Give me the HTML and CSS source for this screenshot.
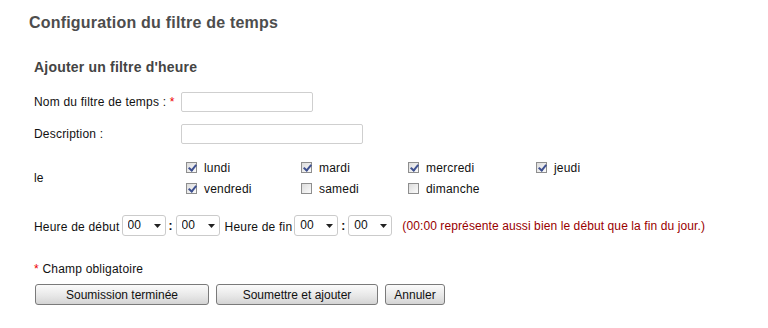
FILE: index.html
```html
<!DOCTYPE html>
<html lang="fr">
<head>
    <meta charset="UTF-8">
    <title>Configuration du filtre de temps</title>
    <link rel="stylesheet" href="styles.css">
</head>
<body>
    <div class="page">
        <h1 class="title">Configuration du filtre de temps</h1>

        <form class="panel">
            <h2 class="subtitle">Ajouter un filtre d'heure</h2>

            <div class="form-row">
                <label class="label">Nom du filtre de temps : <span class="req">*</span></label>
                <input type="text" class="text-input name-input">
            </div>

            <div class="form-row">
                <label class="label">Description :</label>
                <input type="text" class="text-input desc-input">
            </div>

            <div class="form-row days-row">
                <span class="label">le</span>
                <div class="days">
                    <label class="day"><input type="checkbox" class="check" checked> lundi</label>
                    <label class="day"><input type="checkbox" class="check" checked> mardi</label>
                    <label class="day"><input type="checkbox" class="check" checked> mercredi</label>
                    <label class="day"><input type="checkbox" class="check" checked> jeudi</label>
                    <label class="day"><input type="checkbox" class="check" checked> vendredi</label>
                    <label class="day"><input type="checkbox" class="check"> samedi</label>
                    <label class="day"><input type="checkbox" class="check"> dimanche</label>
                </div>
            </div>

            <div class="time-row">
                <span class="time-label">Heure de début</span>
                <div class="select-box">
                    <select class="select"><option>00</option></select>
                    <svg class="arrow" width="7" height="4" viewBox="0 0 7 4"><path d="M0 0H7L3.5 4Z" fill="#222"/></svg>
                </div>
                <span class="colon">:</span>
                <div class="select-box">
                    <select class="select"><option>00</option></select>
                    <svg class="arrow" width="7" height="4" viewBox="0 0 7 4"><path d="M0 0H7L3.5 4Z" fill="#222"/></svg>
                </div>
                <span class="time-label end-label">Heure de fin</span>
                <div class="select-box">
                    <select class="select"><option>00</option></select>
                    <svg class="arrow" width="7" height="4" viewBox="0 0 7 4"><path d="M0 0H7L3.5 4Z" fill="#222"/></svg>
                </div>
                <span class="colon">:</span>
                <div class="select-box">
                    <select class="select"><option>00</option></select>
                    <svg class="arrow" width="7" height="4" viewBox="0 0 7 4"><path d="M0 0H7L3.5 4Z" fill="#222"/></svg>
                </div>
                <span class="note">(00:00 représente aussi bien le début que la fin du jour.)</span>
            </div>

            <p class="required-note"><span class="req">*</span> Champ obligatoire</p>

            <div class="actions">
                <button type="button" class="btn btn-done">Soumission terminée</button>
                <button type="button" class="btn btn-add">Soumettre et ajouter</button>
                <button type="button" class="btn btn-cancel">Annuler</button>
            </div>
        </form>
    </div>
</body>
</html>
```

FILE: styles.css
```css
* {
    padding: 0;
    margin: 0;
    box-sizing: border-box;
}

body {
    font-family: "Liberation Sans", Arial, sans-serif;
    font-size: 12px;
    letter-spacing: 0.2px;
    color: #111;
    background-color: #fff;
}

.page {
    padding-top: 13px;
}

.title {
    margin-left: 29px;
    font-size: 16px;
    line-height: 20px;
    font-weight: bold;
    color: #4d4d4d;
}

.panel {
    padding-left: 34px;
}

.subtitle {
    margin-top: 25px;
    font-size: 14px;
    line-height: 18px;
    font-weight: bold;
    color: #444;
}

.form-row {
    display: flex;
    align-items: center;
    margin-top: 12px;
}
.form-row:first-of-type {
    margin-top: 16px;
}

.label {
    width: 147px;
    flex: none;
}

.req {
    color: #e00;
}

.text-input {
    height: 20px;
    border: 1px solid #cfcfcf;
    border-radius: 2px;
    padding: 0 3px;
    font: inherit;
}
.name-input {
    width: 132px;
}
.desc-input {
    width: 182px;
}

.days-row {
    margin-top: 13px;
}
.days {
    display: grid;
    grid-template-columns: 115px 107px 128px auto;
    grid-auto-rows: 21px;
    padding-left: 5px;
}
.day {
    display: flex;
    align-items: center;
    gap: 7px;
}

.check {
    appearance: none;
    -webkit-appearance: none;
    position: relative;
    width: 11px;
    height: 11px;
    border: 1px solid #8e8e8e;
    background: linear-gradient(135deg, #dcdcdc, #fbfbfb);
    flex: none;
}
.check:checked::after {
    content: "";
    position: absolute;
    left: 3px;
    top: 0;
    width: 3px;
    height: 6px;
    border-right: 2px solid #3f5190;
    border-bottom: 2px solid #3f5190;
    transform: rotate(40deg);
}

.time-row {
    display: flex;
    align-items: center;
    margin-top: 16px;
    height: 21px;
}
.time-label {
    margin-right: 2px;
    padding-top: 3px;
}
.end-label {
    margin-left: 5px;
}

.select-box {
    position: relative;
    width: 44px;
    height: 21px;
}
.select {
    appearance: none;
    -webkit-appearance: none;
    width: 100%;
    height: 100%;
    border: 1px solid #cbcbcb;
    border-radius: 3px;
    background-color: #fff;
    padding: 0 0 1px 5px;
    font: inherit;
    color: #111;
}
.arrow {
    position: absolute;
    right: 5px;
    top: 9px;
    pointer-events: none;
}

.colon {
    width: 10px;
    text-align: center;
    font-weight: bold;
}

.note {
    margin-left: 10px;
    color: #900;
    padding-top: 1px;
    letter-spacing: 0.1px;
}

.required-note {
    margin-top: 26px;
    line-height: 14px;
}

.actions {
    display: flex;
    gap: 7px;
    margin-top: 8px;
}
.btn {
    height: 21px;
    border: 1px solid #7a7a7a;
    border-radius: 3px;
    background: linear-gradient(#fbfbfb, #e6e6e6 60%, #d4d4d4);
    font: inherit;
    font-size: 12px;
    color: #111;
    text-align: center;
}
.btn-done {
    width: 174px;
    margin-left: 1px;
}
.btn-add {
    width: 162px;
}
.btn-cancel {
    width: 60px;
}
```
